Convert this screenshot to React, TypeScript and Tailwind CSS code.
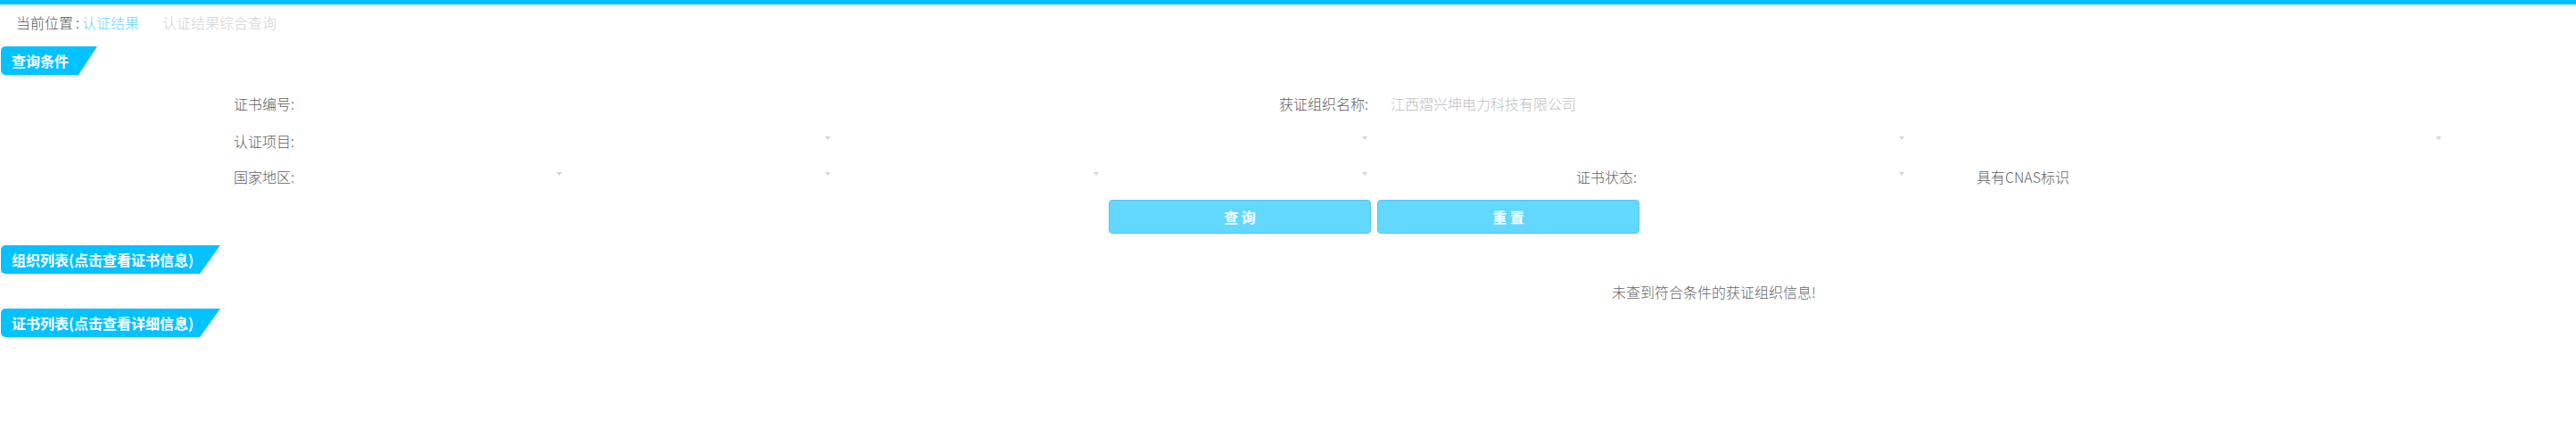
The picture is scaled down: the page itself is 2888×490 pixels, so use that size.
import React from "react";

function Badge({ text, w, slant }: { text: string; w: string; slant: string }) {
  return (
    <div
      className={`ml-[1px] flex h-[32px] items-center rounded-l-[5px] bg-[#02c2ff] pl-[12px] text-[16px] font-bold text-white ${w} ${slant}`}
    >
      {text}
    </div>
  );
}

function Arrow() {
  return (
    <div className="h-0 w-0 -translate-y-[3px] border-x-[3px] border-t-[4px] border-x-transparent border-t-[#d4d4d4]" />
  );
}

function SelectCell({ span }: { span: string }) {
  return (
    <div className={`flex items-center justify-end pr-[1px] ${span}`}>
      <Arrow />
    </div>
  );
}

function Label({ text, span = "" }: { text: string; span?: string }) {
  return <div className={`flex items-center justify-end text-[#5e5e5e] ${span}`}>{text}</div>;
}

export default function App() {
  return (
    <div
      className="w-[2888px] h-[490px] overflow-hidden bg-white text-[16px] font-light leading-none"
      style={{ fontFamily: '"Noto Sans CJK SC", "Noto Sans", sans-serif' }}
    >
      <div className="h-[5px] bg-[#00bfff]" />
      <div className="flex h-[40px] items-center pl-[18px]">
        <span className="text-[#555]">当前位置</span>
        <span className="px-[3px] text-[#555]">:</span>
        <span className="text-[#6ad6f3]">认证结果</span>
        <span className="ml-[26px] text-[#d2d2d2]">认证结果综合查询</span>
      </div>

      <div className="mt-[7px]">
        <Badge
          text="查询条件"
          w="w-[108px]"
          slant="[clip-path:polygon(0_0,100%_0,calc(100%-21px)_100%,0_100%)]"
        />
      </div>

      <div className="mt-[10px] grid grid-cols-[330px_repeat(8,301px)] grid-rows-[44px_40px_40px]">
        {/* row 1 */}
        <Label text="证书编号:" />
        <div className="col-span-3" />
        <Label text="获证组织名称:" />
        <div className="col-span-4 flex items-center pl-[25px] text-[#bdbdbd]">江西熠兴坤电力科技有限公司</div>

        {/* row 2 */}
        <Label text="认证项目:" />
        <SelectCell span="col-span-2" />
        <SelectCell span="col-span-2" />
        <SelectCell span="col-span-2" />
        <SelectCell span="col-span-2" />

        {/* row 3 */}
        <Label text="国家地区:" />
        <SelectCell span="" />
        <SelectCell span="" />
        <SelectCell span="" />
        <SelectCell span="" />
        <Label text="证书状态:" />
        <SelectCell span="" />
        <div className="flex items-center pl-[80px] text-[#5e5e5e]">具有CNAS标识</div>
        <div />
      </div>

      <div className="mt-[6px] flex gap-[7px] pl-[1243px]">
        <button className="h-[38px] w-[294px] rounded-[4px] border border-[#55c4f6] bg-[#62d8ff] text-[16px] font-bold text-white">
          查 询
        </button>
        <button className="h-[38px] w-[294px] rounded-[4px] border border-[#55c4f6] bg-[#62d8ff] text-[16px] font-bold text-white">
          重 置
        </button>
      </div>

      <div className="mt-[13px]">
        <Badge
          text="组织列表(点击查看证书信息)"
          w="w-[246px]"
          slant="[clip-path:polygon(0_0,100%_0,calc(100%-23px)_100%,0_100%)]"
        />
      </div>

      <div className="flex h-[39px] items-center pl-[1807px] text-[#666]">未查到符合条件的获证组织信息!</div>

      <div>
        <Badge
          text="证书列表(点击查看详细信息)"
          w="w-[246px]"
          slant="[clip-path:polygon(0_0,100%_0,calc(100%-23px)_100%,0_100%)]"
        />
      </div>
    </div>
  );
}
